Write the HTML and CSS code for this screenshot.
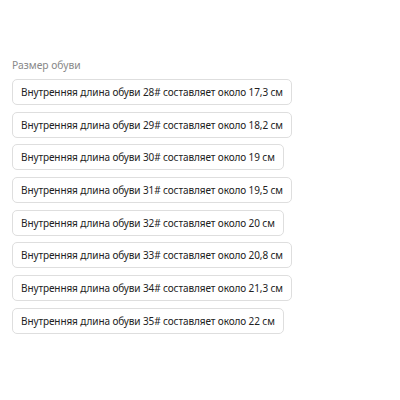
FILE: index.html
```html
<!DOCTYPE html>
<html>
<head>
<meta charset="utf-8">
<link rel="stylesheet" href="styles.css">
</head>
<body>
<div class="panel">
  <div class="label">Размер обуви</div>
  <div class="options">
    <div class="opt">Внутренняя длина обуви 28# составляет около 17,3 см</div>
    <div class="opt">Внутренняя длина обуви 29# составляет около 18,2 см</div>
    <div class="opt">Внутренняя длина обуви 30# составляет около 19 см</div>
    <div class="opt">Внутренняя длина обуви 31# составляет около 19,5 см</div>
    <div class="opt">Внутренняя длина обуви 32# составляет около 20 см</div>
    <div class="opt">Внутренняя длина обуви 33# составляет около 20,8 см</div>
    <div class="opt">Внутренняя длина обуви 34# составляет около 21,3 см</div>
    <div class="opt">Внутренняя длина обуви 35# составляет около 22 см</div>
  </div>
</div>
</body>
</html>
```
FILE: styles.css
```css
html, body {
  margin: 0;
  background: #fff;
}
.panel {
  padding: 58px 0 0 12px;
  font-family: "Noto Sans", "Open Sans", sans-serif;
}
.label {
  font-size: 10.3px;
  color: #888;
  line-height: 14px;
  margin-bottom: 7px;
}
.options {
  display: flex;
  flex-direction: column;
  align-items: flex-start;
  gap: 6.7px;
}
.opt {
  box-sizing: border-box;
  height: 26px;
  line-height: 24px;
  padding: 0 8px;
  border: 1px solid #dedede;
  border-radius: 5px;
  font-size: 10px;
  letter-spacing: -0.1px;
  color: #222;
  white-space: nowrap;
}
```
